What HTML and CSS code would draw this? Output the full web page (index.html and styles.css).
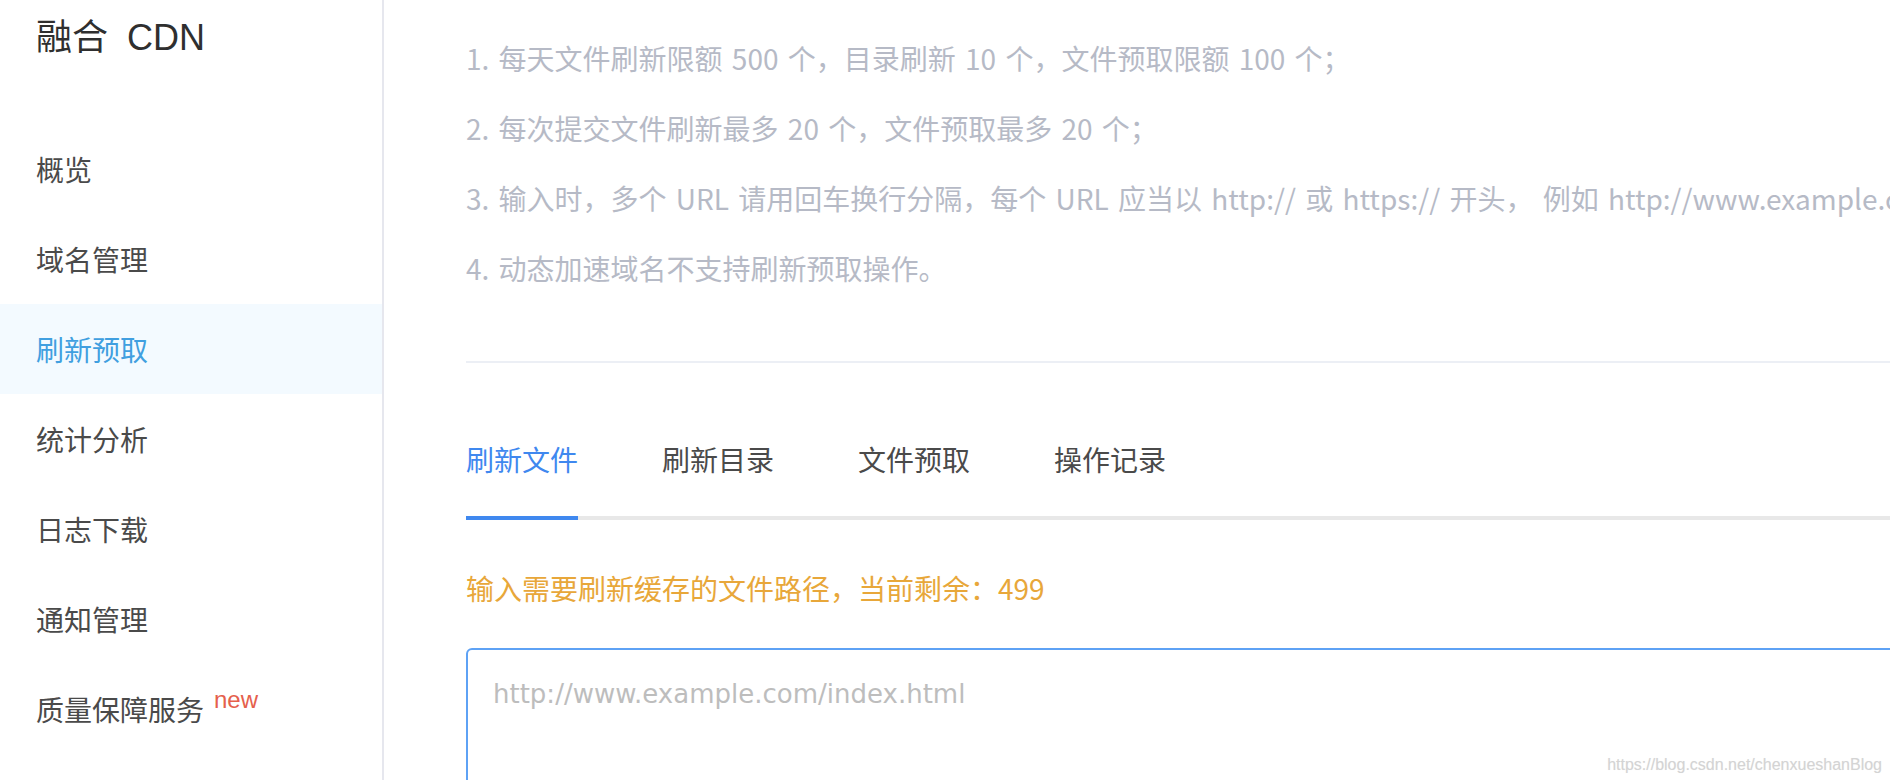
FILE: index.html
```html
<!DOCTYPE html>
<html lang="zh-CN">
<head>
    <meta charset="UTF-8">
    <title>融合 CDN - 刷新预取</title>
    <link rel="stylesheet" href="styles.css">
</head>
<body>
    <div class="page">
        <div class="side">
            <div class="logo">融合 CDN</div>
            <ul class="menu">
                <li>概览</li>
                <li>域名管理</li>
                <li class="on">刷新预取</li>
                <li>统计分析</li>
                <li>日志下载</li>
                <li>通知管理</li>
                <li>质量保障服务<sup class="new">new</sup></li>
            </ul>
        </div>
        <div class="main">
            <ol class="tips">
                <li>1. 每天文件刷新限额 500 个，目录刷新 10 个，文件预取限额 100 个；</li>
                <li>2. 每次提交文件刷新最多 20 个，文件预取最多 20 个；</li>
                <li>3. 输入时，多个 URL 请用回车换行分隔，每个 URL 应当以 http:// 或 https:// 开头， 例如 http://www.example.com/index.html</li>
                <li>4. 动态加速域名不支持刷新预取操作。</li>
            </ol>
            <div class="tabs">
                <span class="tab active">刷新文件</span>
                <span class="tab">刷新目录</span>
                <span class="tab">文件预取</span>
                <span class="tab">操作记录</span>
            </div>
            <p class="remain">输入需要刷新缓存的文件路径，当前剩余：499</p>
            <textarea class="urls" placeholder="http://www.example.com/index.html"></textarea>
        </div>
    </div>
    <span class="mark">https://blog.csdn.net/chenxueshanBlog</span>
</body>
</html>
```

FILE: styles.css
```css
*{margin:0;padding:0;}
html,body{
    height: 100%;
    overflow: hidden;
}
body{
    font-family: "Noto Sans CJK SC", sans-serif;
    background-color: #fff;
    color: #333;
}
.page{
    display: flex;
    height: 100%;
}
.side{
    width: 382px;
    flex-shrink: 0;
    border-right: 2px solid #e6e7ee;
}
.logo{
    height: 124px;
    line-height: 76px;
    padding-left: 36px;
    font-family: "Liberation Sans", "Noto Sans CJK SC", sans-serif;
    font-size: 36px;
    word-spacing: 9px;
    color: #2f2f2f;
}
.menu{
    list-style: none;
}
.menu li{
    height: 90px;
    line-height: 90px;
    padding-left: 36px;
    font-size: 28px;
    color: #4a4a4a;
}
.menu li.on{
    background-color: #f3faff;
    color: #409fe0;
}
.menu .new{
    font-family: "Liberation Sans", sans-serif;
    font-size: 24px;
    color: #e5604c;
    margin-left: 10px;
    vertical-align: 13px;
    line-height: 0;
}
.main{
    width: 1600px;
    flex-shrink: 0;
    padding-left: 82px;
}
.tips{
    list-style: none;
    padding-top: 23px;
    padding-bottom: 58px;
    border-bottom: 2px solid #eceff5;
    white-space: nowrap;
}
.tips li{
    line-height: 70px;
    font-size: 28px;
    word-spacing: 3px;
    color: #b6bac6;
}
.tabs{
    display: flex;
    gap: 84px;
    margin-top: 76px;
    border-bottom: 4px solid #e8e8e8;
}
.tab{
    line-height: 40px;
    padding-bottom: 37px;
    font-size: 28px;
    color: #4a4a4a;
}
.tab.active{
    color: #3f88ef;
    border-bottom: 4px solid #3f88ef;
    margin-bottom: -4px;
}
.remain{
    margin-top: 48px;
    line-height: 40px;
    font-size: 28px;
    color: #e8a73a;
}
.urls{
    display: block;
    margin-top: 40px;
    width: 1500px;
    height: 260px;
    border: 2px solid #5ea2f5;
    border-radius: 6px;
    padding: 24px 25px;
    font-family: "DejaVu Sans", sans-serif;
    font-size: 26px;
    line-height: 40px;
    resize: none;
    outline: none;
}
.urls::placeholder{
    color: #bdbdbd;
}
.mark{
    position: absolute;
    right: 8px;
    bottom: 6px;
    font-family: "Liberation Sans", sans-serif;
    font-size: 16px;
    color: #d4d4d4;
    text-shadow: 0 0 1px #eee;
}
```
